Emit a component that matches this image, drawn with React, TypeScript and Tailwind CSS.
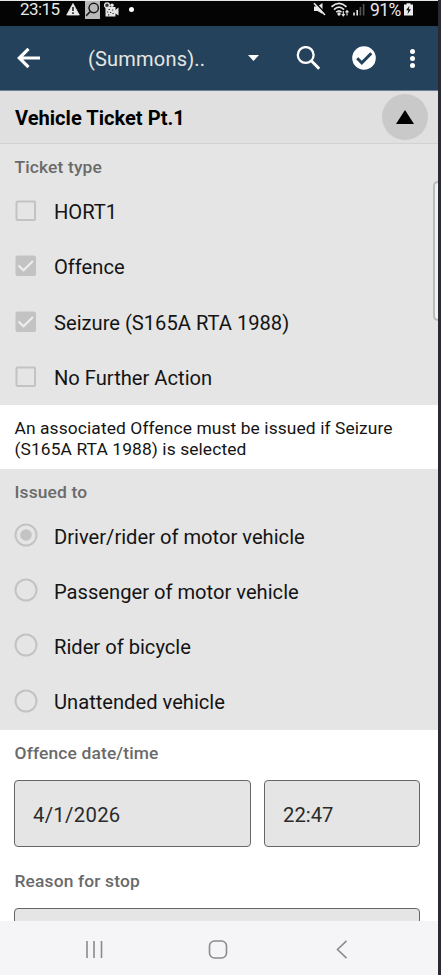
import React from 'react';

type Option = { label: string; checked?: boolean };

const ticketTypes: Option[] = [
  { label: 'HORT1' },
  { label: 'Offence', checked: true },
  { label: 'Seizure (S165A RTA 1988)', checked: true },
  { label: 'No Further Action' },
];

const issuedTo: Option[] = [
  { label: 'Driver/rider of motor vehicle', checked: true },
  { label: 'Passenger of motor vehicle' },
  { label: 'Rider of bicycle' },
  { label: 'Unattended vehicle' },
];

const StatusBar: React.FC = () => (
  <div className="flex h-[26px] shrink-0 items-start border-t border-[#e4e8e8] bg-[#040404] pl-[20px] pr-[25px] text-[#e8e8e8]">
    <span className="w-[41px] whitespace-nowrap text-[17px] leading-[17px] tracking-[-0.55px]">23:15</span>
    {/* Notification icons */}
    <svg className="ml-[5px] h-[16px] w-[14px]" viewBox="0 0 14 16">
      <path d="M7 2.5 L13.3 14 H0.7 Z" fill="#ececec" stroke="#ececec" strokeWidth="0.8" strokeLinejoin="round" />
      <path d="M7 6 V10 M7 11.3 V13" stroke="#111" strokeWidth="1.5" />
    </svg>
    <svg className="ml-[5px] h-[18px] w-[15px]" viewBox="0 0 15 18">
      <rect width="15" height="18" fill="#b9b9b9" />
      <circle cx="8.7" cy="7" r="4.7" fill="none" stroke="#161616" strokeWidth="1.4" />
      <path d="M5.3 10.5 L1.2 14.8" stroke="#161616" strokeWidth="1.6" />
    </svg>
    <svg className="ml-[4px] h-[17px] w-[16px]" viewBox="0 0 16 17">
      <path d="M1.5 6 H11.5 V9 L14.5 6.5 V14.5 L11.5 12.5 V15.5 H1.5 Z" fill="#e4e4e4" />
      <circle cx="3" cy="4.3" r="2.4" fill="#333" stroke="#e4e4e4" strokeWidth="1.3" />
      <circle cx="8" cy="4.3" r="1.8" fill="#e4e4e4" />
      <path d="M4.5 8.5 h1.5 M8 9 h1.2 M3 11 h1.2 M6 11.5 h1.2 M8.5 12.5 h1.2 M4 13.8 h1.2" stroke="#333" strokeWidth="1.2" />
    </svg>
    <span className="ml-[9px] mt-[6px] h-[5px] w-[5px] rounded-full bg-white" />

    {/* System icons */}
    <svg className="ml-auto h-[15px] w-[13px]" viewBox="0 0 13 15">
      <path d="M1 5.5 H4.5 L9.5 2 V13 L4.5 10 H1 Z" fill="#e8e8e8" />
      <path d="M2.5 2 L13 13" stroke="#040404" strokeWidth="1.6" />
      <path d="M1 2.3 L12 14" stroke="#e8e8e8" strokeWidth="1.6" />
    </svg>
    <svg className="ml-[5px] h-[16px] w-[18px]" viewBox="0 0 18 16" fill="none" stroke="#e8e8e8" strokeWidth="1.7">
      <path d="M0.5 5.8 Q8 -1 15.5 5.8 M3 8.6 Q8 3.8 13 8.6 M5.3 11.3 Q8 8.3 10.5 11.3" />
      <circle cx="8" cy="13" r="0.8" fill="#e8e8e8" />
      <path d="M12.3 10 V14.5 M10.8 13 L12.3 14.8 L13.8 13 M16 14.5 V9.5 M14.5 11.3 L16 9.5 L17.5 11.3" strokeWidth="1.1" />
    </svg>
    <svg className="ml-[4px] h-[16px] w-[12px]" viewBox="0 0 12 16">
      <path d="M1 11.5 V14.5 M4.2 9 V14.5" stroke="#e8e8e8" strokeWidth="1.6" />
      <path d="M7.4 6 V14.5 M10.6 3 V14.5" stroke="#555" strokeWidth="1.6" />
    </svg>
    <span className="ml-[5px] w-[33px] whitespace-nowrap text-[17.5px] leading-[18px] tracking-[-0.6px]">91%</span>
    <svg className="ml-[1px] h-[16px] w-[9px]" viewBox="0 0 9 16">
      <path d="M2.5 3.5 V2.3 H6.5 V3.5 H9 V14.5 H0 V3.5 Z" fill="#ececec" />
      <path d="M5.5 4.8 L2 9.3 H4.3 L3.5 13.2 L7 8.3 H4.8 Z" fill="#111" />
    </svg>
  </div>
);

const Toolbar: React.FC = () => (
  <header className="flex h-[65px] shrink-0 items-center border-b border-[#6d7f99] bg-[#24425c] pl-[17px] pr-[23px] text-white">
    <svg className="h-[24px] w-[24px]" viewBox="0 0 24 24" fill="none" stroke="#fff" strokeWidth="3.2">
      <path d="M23 12 H2.5 M11.5 2.8 L2.3 12 L11.5 21.2" />
    </svg>
    <span className="ml-[47px] w-[118px] whitespace-nowrap pt-[2px] text-[20px] tracking-[0.2px] text-[#e6e6e2]">(Summons)..</span>
    <svg className="ml-[42px] h-[6px] w-[11px]" viewBox="0 0 11 6">
      <path d="M0 0 H11 L5.5 6 Z" fill="#fff" />
    </svg>
    <svg className="ml-[37px] h-[24px] w-[24px]" viewBox="0 0 24 24" fill="none" stroke="#fff">
      <circle cx="9.7" cy="9" r="7.9" strokeWidth="2.3" />
      <path d="M15.3 14.8 L23.2 22.7" strokeWidth="3" />
    </svg>
    <svg className="ml-[32px] h-[24px] w-[24px]" viewBox="0 0 24 24">
      <circle cx="12" cy="12" r="11.8" fill="#fff" />
      <path d="M5.2 12.3 L9.8 16.8 L19.3 7.3" fill="none" stroke="#24425c" strokeWidth="3" />
    </svg>
    <div className="ml-auto flex flex-col gap-[2px] pt-[1px]">
      <span className="h-[5px] w-[5px] rounded-full bg-white" />
      <span className="h-[5px] w-[5px] rounded-full bg-white" />
      <span className="h-[5px] w-[5px] rounded-full bg-white" />
    </div>
  </header>
);

const Checkbox: React.FC<{ checked?: boolean }> = ({ checked }) => (
  <svg className="ml-[15px] h-[22px] w-[22px]" viewBox="0 0 22 22" fill="none">
    <rect x="1.5" y="1.5" width="18.5" height="18.5" rx="1" stroke="#c3c3c3" strokeWidth="2" fill={checked ? '#c3c3c3' : 'none'} />
    {checked && <path d="M3.5 10.5 L8.5 15.3 L18 6" stroke="#eeeeee" strokeWidth="2" />}
  </svg>
);

const Radio: React.FC<{ checked?: boolean }> = ({ checked }) => (
  <svg className="mb-[2px] ml-[14px] h-[24px] w-[24px]" viewBox="0 0 24 24" fill="none">
    <circle cx="12" cy="12" r="10.5" stroke="#c3c3c3" strokeWidth="2" />
    {checked && <circle cx="12" cy="12" r="5.8" fill="#c3c3c3" />}
  </svg>
);

const OptionRow: React.FC<{ option: Option; kind: 'checkbox' | 'radio' }> = ({ option, kind }) => (
  <div className="flex h-[55.3px] items-center">
    <div className="w-[54px]">
      {kind === 'checkbox' ? <Checkbox checked={option.checked} /> : <Radio checked={option.checked} />}
    </div>
    <span className="whitespace-nowrap pt-[2px] text-[20.15px] text-[#141414]">{option.label}</span>
  </div>
);

const FieldLabel: React.FC<{ children: React.ReactNode }> = ({ children }) => (
  <div className="pl-[14.5px] text-[17.4px] font-medium leading-[20px] tracking-[0.15px] text-[#6a6a6a]">{children}</div>
);

const NavigationBar: React.FC = () => (
  <nav className="flex h-[54px] shrink-0 items-center bg-[#f5f5f8] pt-[3px]">
    <svg className="ml-[85px] h-[20px] w-[18px]" viewBox="0 0 18 20" stroke="#8b8b8e" strokeWidth="1.6">
      <path d="M2 1 V18 M9 1 V18 M16.5 1 V18" />
    </svg>
    <svg className="ml-[105px] h-[20px] w-[20px]" viewBox="0 0 20 20" fill="none" stroke="#8b8b8e" strokeWidth="1.6">
      <rect x="1.5" y="1" width="17" height="17" rx="5" />
    </svg>
    <svg className="ml-[108px] h-[20px] w-[12px]" viewBox="0 0 12 20" fill="none" stroke="#8b8b8e" strokeWidth="1.6">
      <path d="M10.5 0.8 L1.5 9.5 L10.5 18.2" />
    </svg>
  </nav>
);

const App: React.FC = () => {
  return (
    <div className="flex h-[975px] w-[441px] overflow-hidden bg-[#2a2b30] font-['Roboto','Liberation_Sans',sans-serif]">
      <div className="flex w-[438px] flex-col bg-white">
        <StatusBar />
        <Toolbar />

        <main className="relative flex min-h-0 flex-1 flex-col overflow-hidden">
          <div className="flex h-[53px] shrink-0 items-center justify-between border-b border-[#d2d2d2] bg-[#e0e0e0] pl-[15px] pr-[10px]">
            <h1 className="pt-[2px] text-[20.1px] font-bold text-black">Vehicle Ticket Pt.1</h1>
            <div className="flex h-[46px] w-[46px] items-center justify-center rounded-full bg-[#c9c9c9]">
              <svg className="h-[14px] w-[18px]" viewBox="0 0 18 14">
                <path d="M9 0 L18 14 H0 Z" fill="#000" />
              </svg>
            </div>
          </div>

          <section className="h-[261px] shrink-0 bg-[#e5e5e5] pt-[13px]">
            <FieldLabel>Ticket type</FieldLabel>
            <div className="pt-[6.5px]">
              {ticketTypes.map((option) => (
                <OptionRow key={option.label} option={option} kind="checkbox" />
              ))}
            </div>
          </section>

          <p className="h-[64px] shrink-0 bg-white pl-[14.5px] pt-[13px] text-[17.4px] leading-[21px] tracking-[0.1px] text-[#141414]">
            An associated Offence must be issued if Seizure
            <br />
            (S165A RTA 1988) is selected
          </p>

          <section className="h-[261px] shrink-0 bg-[#e5e5e5] pt-[13px]">
            <FieldLabel>Issued to</FieldLabel>
            <div className="pt-[6px]">
              {issuedTo.map((option) => (
                <OptionRow key={option.label} option={option} kind="radio" />
              ))}
            </div>
          </section>

          <section className="shrink-0 bg-white pt-[13px]">
            <FieldLabel>Offence date/time</FieldLabel>
            <div className="mt-[17px] flex gap-[13.5px] pl-[14px]">
              <div className="flex h-[67px] w-[236.5px] items-center rounded border border-[#666] bg-[#e5e5e5] pl-[18px] pt-[3px] text-[20.3px] tracking-[0.3px] text-[#2b2b2b]">
                4/1/2026
              </div>
              <div className="flex h-[67px] w-[155.5px] items-center rounded border border-[#666] bg-[#e5e5e5] pl-[18px] pt-[3px] text-[20.3px] text-[#2b2b2b]">
                22:47
              </div>
            </div>
            <div className="pt-[24px]">
              <FieldLabel>Reason for stop</FieldLabel>
            </div>
            <div className="ml-[14px] mt-[17px] h-[67px] w-[405.5px] rounded border border-[#666] bg-[#e5e5e5]" />
          </section>

          {/* Edge panel handle */}
          <div className="absolute right-0 top-[90px] h-[140px] w-[5px] rounded-l-[5px] border-y-2 border-l-2 border-[#b8bcbb] bg-[#f1f3f2]" />
        </main>

        <NavigationBar />
      </div>
    </div>
  );
};

export default App;
